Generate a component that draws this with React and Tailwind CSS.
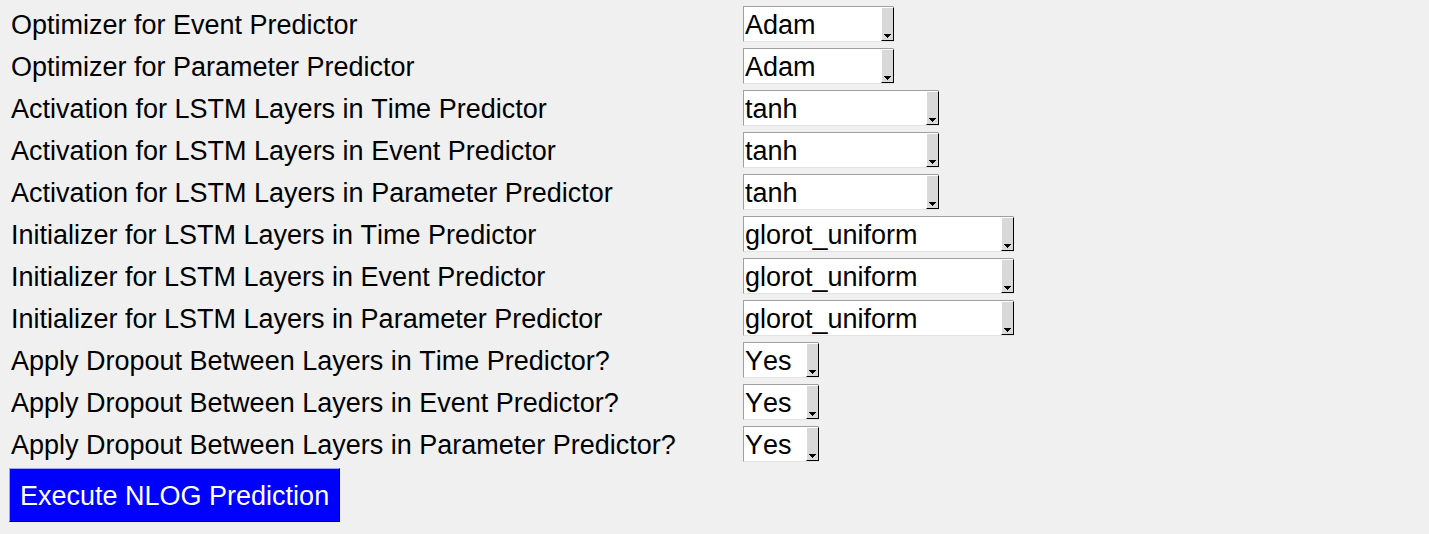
const yesNo = ["Yes", "No"];
const optimizers = ["Adam", "SGD", "RMSprop", "Adagrad"];
const activations = ["tanh", "relu", "sigmoid", "softmax"];
const initializers = ["glorot_uniform", "glorot_normal", "he_uniform", "he_normal"];

const fields = [
  { id: "opt-event", label: "Optimizer for Event Predictor", options: optimizers, width: "w-[151px]" },
  { id: "opt-param", label: "Optimizer for Parameter Predictor", options: optimizers, width: "w-[151px]" },
  { id: "act-time", label: "Activation for LSTM Layers in Time Predictor", options: activations, width: "w-[196px]" },
  { id: "act-event", label: "Activation for LSTM Layers in Event Predictor", options: activations, width: "w-[196px]" },
  { id: "act-param", label: "Activation for LSTM Layers in Parameter Predictor", options: activations, width: "w-[196px]" },
  { id: "init-time", label: "Initializer for LSTM Layers in Time Predictor", options: initializers, width: "w-[271px]" },
  { id: "init-event", label: "Initializer for LSTM Layers in Event Predictor", options: initializers, width: "w-[271px]" },
  { id: "init-param", label: "Initializer for LSTM Layers in Parameter Predictor", options: initializers, width: "w-[271px]" },
  { id: "drop-time", label: "Apply Dropout Between Layers in Time Predictor?", options: yesNo, width: "w-[76px]" },
  { id: "drop-event", label: "Apply Dropout Between Layers in Event Predictor?", options: yesNo, width: "w-[76px]" },
  { id: "drop-param", label: "Apply Dropout Between Layers in Parameter Predictor?", options: yesNo, width: "w-[76px]" },
];

function Combo({ id, options, width }) {
  return (
    <div className={`relative h-9 ${width}`}>
      <select
        id={id}
        defaultValue={options[0]}
        className="block size-full appearance-none rounded-none border border-t-[#a0a0a0] border-l-[#a0a0a0] border-r-[#e3e3e3] border-b-[#e3e3e3] bg-white pl-px leading-9 text-black [font-kerning:none] outline-none"
      >
        {options.map((o) => (
          <option key={o}>{o}</option>
        ))}
      </select>
      <span className="pointer-events-none absolute inset-y-px right-0 flex w-[13px] items-end justify-center border border-t-white border-r-black border-b-black border-l-white bg-[#d9d9d9] pb-0.5">
        <svg width="7" height="4" viewBox="0 0 7 4" shapeRendering="crispEdges" aria-hidden="true">
          <path d="M0 0h7v1H6v1H5v1H4v1H3V3H2V2H1V1H0z" fill="#000" />
        </svg>
      </span>
    </div>
  );
}

export default function App() {
  return (
    <main className="min-h-screen bg-[#f0f0f0] px-[9px] pt-1.5 pb-3 font-['Liberation_Sans',Arial,sans-serif] text-[27px] leading-8 text-black [font-kerning:none]">
      <form onSubmit={(e) => e.preventDefault()}>
        <div className="flex flex-col gap-1.5">
          {fields.map((f) => (
            <div key={f.id} className="flex">
              <label htmlFor={f.id} className="w-[734px] shrink-0 pt-[3px] pl-0.5">
                {f.label}
              </label>
              <Combo id={f.id} options={f.options} width={f.width} />
            </div>
          ))}
        </div>
        <button
          type="submit"
          className="mt-1.5 block h-[54px] border border-t-[#a0a0ff] border-l-[#a0a0ff] border-r-black border-b-black bg-[#0000ff] px-2.5 pt-0.5 text-white [font-kerning:none]"
        >
          Execute NLOG Prediction
        </button>
      </form>
    </main>
  );
}
